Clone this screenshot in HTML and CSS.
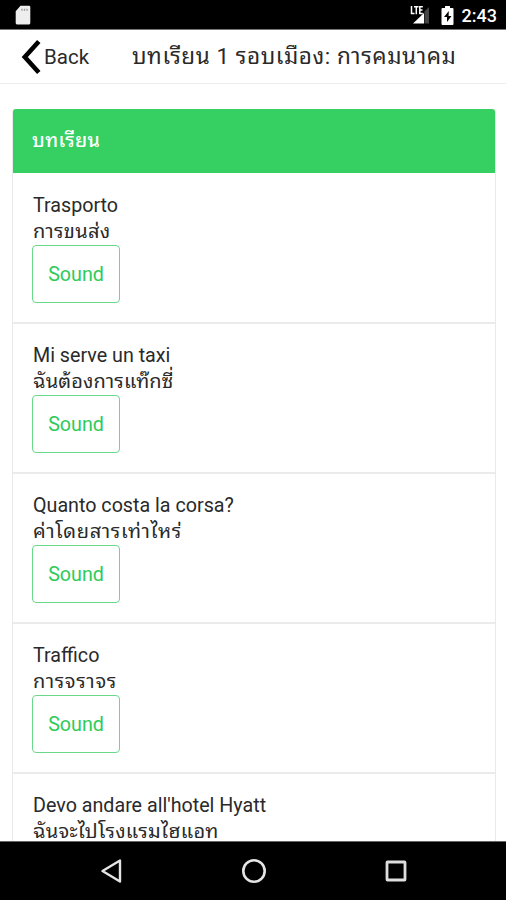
FILE: index.html
```html
<!DOCTYPE html>
<html lang="th">
<head>
<meta charset="utf-8">
<title>บทเรียน 1</title>
<link rel="stylesheet" href="styles.css">
</head>
<body>
<div class="screen">
  <header class="status">
    <svg class="sd" width="16" height="20" viewBox="0 0 16 20"><path d="M5.500 .8H14a1.300 1.300 0 0 1 1.300 1.300v16a1.300 1.300 0 0 1-1.300 1.300H2A1.300 1.300 0 0 1 .7 18.100V6.300z" fill="#eee"/><path d="M7 3.800v2M9.500 3.800v2M12 3.800v2" stroke="#999" stroke-width="1.300"/></svg>
    <div class="tray">
      <svg width="24" height="20" viewBox="0 0 24 20"><path d="M17.500 6.500 22 2v16.500h-4.500z" fill="#444"/><path d="M6 18.500 17 8v10.500z" fill="#fff"/><path d="M4.500 1v7.500H7.500M7 1.700h4.500M9.300 1.700v7.500M15.800 1.700h-3v6.800h3M12.800 5h2.700" fill="none" stroke="#fff" stroke-width="1.500"/></svg>
      <svg class="battery" width="13" height="19" viewBox="0 0 13 19"><path d="M4 0h5v2h2.500a1 1 0 0 1 1 1v15a1 1 0 0 1-1 1h-10a1 1 0 0 1-1-1V3a1 1 0 0 1 1-1H4z" fill="#fff"/><path d="M7.800 5 3 11h3v5l4.500-6H7.600z" fill="#000"/></svg>
      <span class="clock">2:43</span>
    </div>
  </header>
  <nav class="bar">
    <a class="back"><svg width="20" height="36" viewBox="0 0 20 36"><path d="M17.800 2.500 3.800 18l14 15.500" fill="none" stroke="#000" stroke-width="4.600"/></svg><span>Back</span></a>
    <h1 class="title">บทเรียน 1 รอบเมือง: การคมนาคม</h1>
  </nav>
  <main class="content">
    <section class="card">
      <h2 class="card-head">บทเรียน</h2>
      <article class="row"><p>Trasporto</p><p class="thai">การขนส่ง</p><button class="sound">Sound</button></article>
      <article class="row"><p>Mi serve un taxi</p><p class="thai snug">ฉันต้องการแท๊กซี่</p><button class="sound">Sound</button></article>
      <article class="row"><p>Quanto costa la corsa?</p><p class="thai wide">ค่าโดยสารเท่าไหร่</p><button class="sound">Sound</button></article>
      <article class="row"><p>Traffico</p><p class="thai wide">การจราจร</p><button class="sound">Sound</button></article>
      <article class="row"><p>Devo andare all'hotel Hyatt</p><p class="thai">ฉันจะไปโรงแรมไฮแอท</p><button class="sound">Sound</button></article>
    </section>
  </main>
  <footer class="keys">
    <svg width="24" height="26" viewBox="0 0 24 26"><path d="M21 2.500v21L3.500 13z" fill="none" stroke="#e4e4e4" stroke-width="2.400" stroke-linejoin="round"/></svg>
    <svg width="26" height="26" viewBox="0 0 26 26"><circle cx="13" cy="13" r="10.700" fill="none" stroke="#e4e4e4" stroke-width="2.600"/></svg>
    <svg width="24" height="26" viewBox="0 0 24 26"><rect x="3" y="4" width="18" height="18" rx=".5" fill="none" stroke="#dedede" stroke-width="2.800"/></svg>
  </footer>
</div>
</body>
</html>
```
FILE: styles.css
```css
* { box-sizing: border-box; }
body { margin: 0; background: #fff; color: #2a2a2a; font-family: Roboto, "Noto Sans Thai Looped", Loma, Waree, Garuda, Umpush, Laksaman, Norasi, "Noto Serif Thai", FreeSerif, "Noto Sans Thai", sans-serif; font-size: 19.700px; }
.screen { width: 506px; height: 900px; display: flex; flex-direction: column; overflow: hidden; }
.status { height: 30px; flex: none; background: #000; border-bottom: 1px solid #777; display: flex; justify-content: space-between; padding: 5px 9px 0 15px; }
.tray { display: flex; align-items: flex-start; }
.battery { margin: 1px 8px 0 10px; }
.clock { color: #fff; font-size: 18px; font-weight: 500; line-height: 22px; }
.bar { height: 54px; flex: none; border-bottom: 1px solid #ededed; display: flex; align-items: center; padding-left: 21px; }
.back { display: flex; align-items: center; gap: 3px; width: 111px; font-size: 20.500px; }
.title { margin: 0; padding-bottom: 1px; font-size: 22.500px; line-height: 34px; letter-spacing: .57px; font-weight: 400; white-space: nowrap; }
.content { flex: 1; min-height: 0; overflow: hidden; padding: 25px 9px 0 12px; }
.card { width: 484px; border: 1px solid #e9e9e9; border-radius: 3px; }
.card-head { height: 64px; margin: -1px 0 0; padding-left: 19px; background: #36cf61; color: #fff; border-radius: 3px 3px 0 0; font-size: 19.500px; letter-spacing: .4px; font-weight: 500; line-height: 63px; }
.row { height: 150px; padding: 19px 19px 0; border-bottom: 2px solid #ebebeb; }
.card-head + .row { height: 151px; padding-top: 20px; }
.row p { margin: 0 0 0 1px; height: 26px; line-height: 25px; white-space: nowrap; }
.row .thai { font-size: 20px; letter-spacing: .3px; }
.row .snug { letter-spacing: .15px; }
.row .wide { letter-spacing: .65px; }
.sound { display: block; width: 88px; height: 58px; padding: 0; border: 1.500px solid #6cd88b; border-radius: 4px; background: #fff; color: #2dcb5b; font: 400 19.700px Roboto, sans-serif; }
.keys { height: 59px; flex: none; background: #000; border-top: 1px solid #666; display: flex; justify-content: space-between; align-items: center; padding: 0 98px 0 99px; }
```
